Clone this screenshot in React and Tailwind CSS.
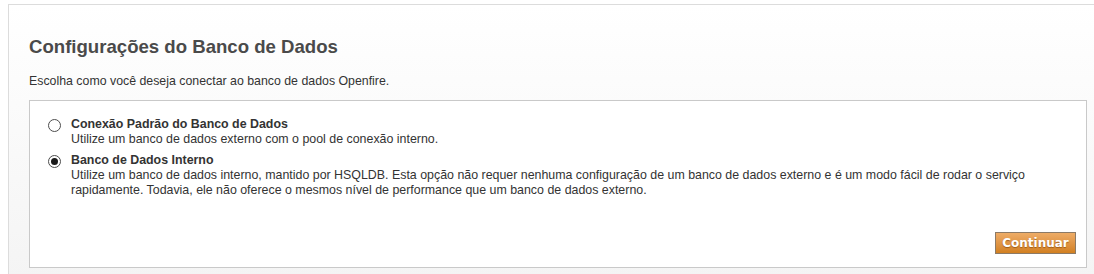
import React, { useState } from 'react';

const options = [
  {
    id: 'standard',
    title: 'Conexão Padrão do Banco de Dados',
    desc: 'Utilize um banco de dados externo com o pool de conexão interno.',
  },
  {
    id: 'embedded',
    title: 'Banco de Dados Interno',
    desc: 'Utilize um banco de dados interno, mantido por HSQLDB. Esta opção não requer nenhuma configuração de um banco de dados externo e é um modo fácil de rodar o serviço rapidamente. Todavia, ele não oferece o mesmos nível de performance que um banco de dados externo.',
  },
];

const Radio = ({ checked, onClick }) => (
  <button
    type="button"
    onClick={onClick}
    className="mt-[2px] w-[13px] h-[13px] shrink-0 rounded-full border border-[#4d4d4d] bg-white flex items-center justify-center"
  >
    {checked && <span className="w-[7px] h-[7px] rounded-full bg-[#1a1a1a]" />}
  </button>
);

const App = () => {
  const [mode, setMode] = useState('embedded');

  return (
    <div className="w-[1094px] h-[274px] overflow-hidden bg-white font-['Liberation_Sans',Arial,sans-serif]">
      <div className="ml-[8px] mt-[4px] h-[300px] border-l border-t border-[#dcdcdc] bg-gradient-to-b from-white to-[#f3f3f3] pl-[20px] pt-[31px]">
        <h1 className="text-[18.6px] leading-[22px] font-bold text-[#4a4a4a]">Configurações do Banco de Dados</h1>
        <p className="mt-[16px] text-[12.35px] leading-[15px] text-[#333]">
          Escolha como você deseja conectar ao banco de dados Openfire.
        </p>

        <div className="mt-[11px] w-[1058px] h-[168px] border border-[#c9c9c9] bg-white flex flex-col pl-[18px] pr-[10px] pt-[16px]">
          <div className="flex flex-col gap-[6px]">
            {options.map((o) => (
              <div key={o.id} className="flex gap-[10px]">
                <Radio checked={mode === o.id} onClick={() => setMode(o.id)} />
                <div className="text-[12.4px] leading-[15px] text-[#333]">
                  <div className="font-bold">{o.title}</div>
                  <div className="max-w-[990px]">{o.desc}</div>
                </div>
              </div>
            ))}
          </div>

          <div className="mt-auto mb-[13px] flex justify-end">
            <button
              type="button"
              className="w-[81px] h-[22px] border border-[#8c7a66] bg-gradient-to-b from-[#eeac66] to-[#d2801f] text-white text-[12px] font-bold font-['DejaVu_Sans',Verdana,sans-serif] [text-shadow:0_1px_1px_rgba(120,60,0,0.6)]"
            >
              Continuar
            </button>
          </div>
        </div>
      </div>
    </div>
  );
};

export default App;
